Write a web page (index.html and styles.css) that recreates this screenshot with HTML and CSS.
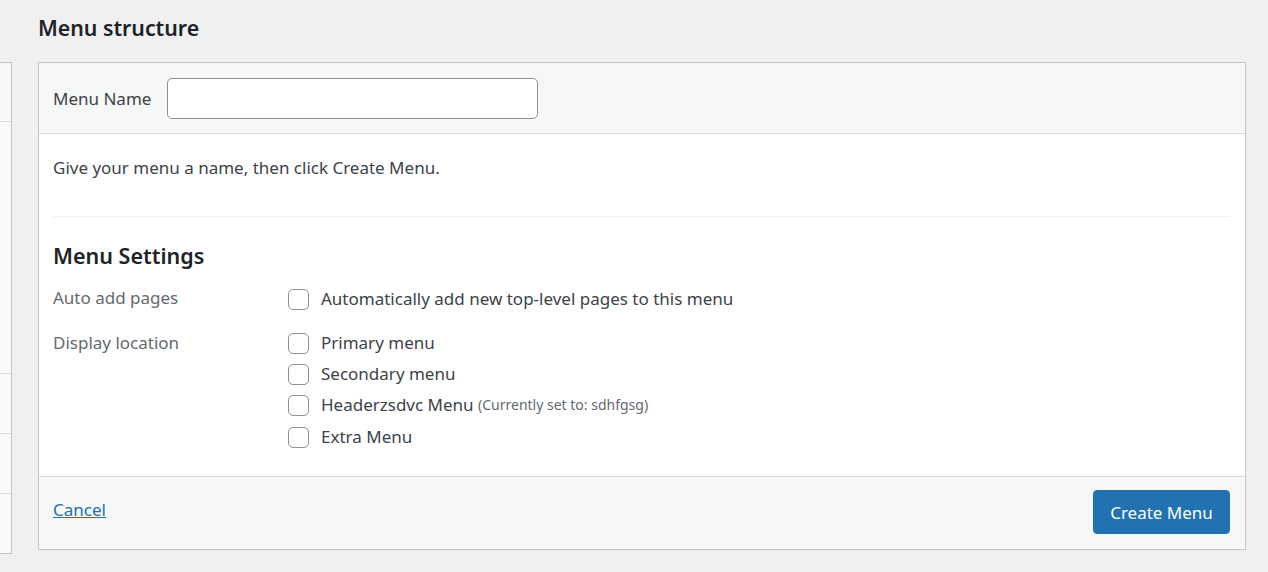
FILE: index.html
```html
<!DOCTYPE html>
<html>
<head>
<meta charset="utf-8">
<link rel="stylesheet" href="styles.css">
</head>
<body>
<div class="page">
  <aside class="side">
    <div class="side-row side-head"></div>
    <div class="side-row side-tall"></div>
    <div class="side-row"></div>
    <div class="side-row"></div>
    <div class="side-row"></div>
  </aside>
  <main class="main">
    <h2 class="title">Menu structure</h2>
    <div class="panel">
      <div class="panel-head">
        <label class="name-label" for="menu-name">Menu Name</label>
        <input class="name-input" id="menu-name" type="text">
      </div>
      <div class="panel-body">
        <p class="intro">Give your menu a name, then click Create Menu.</p>
        <div class="sep"></div>
        <h3 class="settings-title">Menu Settings</h3>
        <div class="setting">
          <div class="setting-label">Auto add pages</div>
          <div class="setting-opts">
            <label class="opt"><span class="box"></span>Automatically add new top-level pages to this menu</label>
          </div>
        </div>
        <div class="setting setting-loc">
          <div class="setting-label">Display location</div>
          <div class="setting-opts">
            <label class="opt"><span class="box"></span>Primary menu</label>
            <label class="opt"><span class="box"></span>Secondary menu</label>
            <label class="opt"><span class="box"></span>Headerzsdvc Menu <span class="note">(Currently set to: sdhfgsg)</span></label>
            <label class="opt"><span class="box"></span>Extra Menu</label>
          </div>
        </div>
      </div>
      <div class="panel-foot">
        <a class="cancel" href="#">Cancel</a>
        <button class="create" type="button">Create Menu</button>
      </div>
    </div>
  </main>
</div>
</body>
</html>
```
FILE: styles.css
```css
html, body {
  margin: 0;
  padding: 0;
  background: #f0f0f1;
  font-family: "Noto Sans", "Open Sans", sans-serif;
  color: #3c434a;
}
.page {
  display: flex;
  align-items: flex-start;
  gap: 26px;
  height: 572px;
  overflow: hidden;
}
.side {
  width: 11px;
  margin-top: 62px;
  border: 1px solid #c3c4c7;
  border-left: none;
  background: #f9f9f9;
  display: flex;
  flex-direction: column;
}
.side-row {
  height: 59px;
  border-bottom: 1px solid #dcdcde;
}
.side-row:last-child { border-bottom: none; }
.side-head { height: 58px; background: #f6f7f7; }
.side-tall { height: 251px; }
.main {
  width: 1208px;
}
.title {
  margin: 0;
  height: 62px;
  font-size: 21.3px;
  font-weight: 600;
  color: #1d2327;
  line-height: 56px;
}
.panel {
  border: 1px solid #c3c4c7;
  background: #fff;
  height: 486px;
  display: flex;
  flex-direction: column;
}
.panel-head {
  background: #f6f7f7;
  border-bottom: 1px solid #dcdcde;
  padding: 15px 14px 14px;
  display: flex;
  align-items: center;
  gap: 16px;
}
.name-label {
  font-size: 17px;
}
.name-input {
  width: 371px;
  height: 41px;
  box-sizing: border-box;
  border: 1px solid #8c8f94;
  border-radius: 5px;
  background: #fff;
  margin: 0;
}
.panel-body {
  flex: 1;
  padding: 0 15px 0 14px;
}
.intro {
  margin: 0;
  padding-top: 23px;
  height: 58px;
  box-sizing: border-box;
  font-size: 17px;
  line-height: 22px;
}
.sep {
  margin-top: 24px;
  border-top: 1px solid #f0f0f1;
}
.settings-title {
  margin: 0;
  padding-top: 25px;
  font-size: 21.5px;
  font-weight: 600;
  color: #1d2327;
  line-height: 28px;
}
.setting {
  display: flex;
  margin-top: 13px;
}
.setting-loc { margin-top: 14px; }
.setting-label {
  width: 235px;
  font-size: 17px;
  color: #646970;
  line-height: 29px;
}
.setting-opts {
  display: flex;
  flex-direction: column;
  gap: 1px;
}
.opt {
  display: flex;
  align-items: center;
  font-size: 17px;
  line-height: 30px;
  white-space: pre;
}
.opt:last-child { margin-top: 1px; }
.box {
  width: 19px;
  height: 19px;
  border: 1px solid #8c8f94;
  border-radius: 5px;
  background: #fff;
  margin-right: 12px;
  flex: none;
}
.note {
  font-size: 14px;
  color: #646970;
}
.panel-foot {
  background: #f6f7f7;
  border-top: 1px solid #dcdcde;
  height: 72px;
  padding: 0 15px 0 14px;
  display: flex;
  align-items: center;
  justify-content: space-between;
}
.cancel {
  color: #2271b1;
  font-size: 17px;
  text-decoration: underline;
  margin-top: -7px;
}
.create {
  background: #2271b1;
  color: #fff;
  border: 1px solid #2271b1;
  border-radius: 4px;
  font-family: inherit;
  font-size: 17px;
  height: 44px;
  width: 137px;
  padding: 0;
  margin-top: -2px;
}
```
